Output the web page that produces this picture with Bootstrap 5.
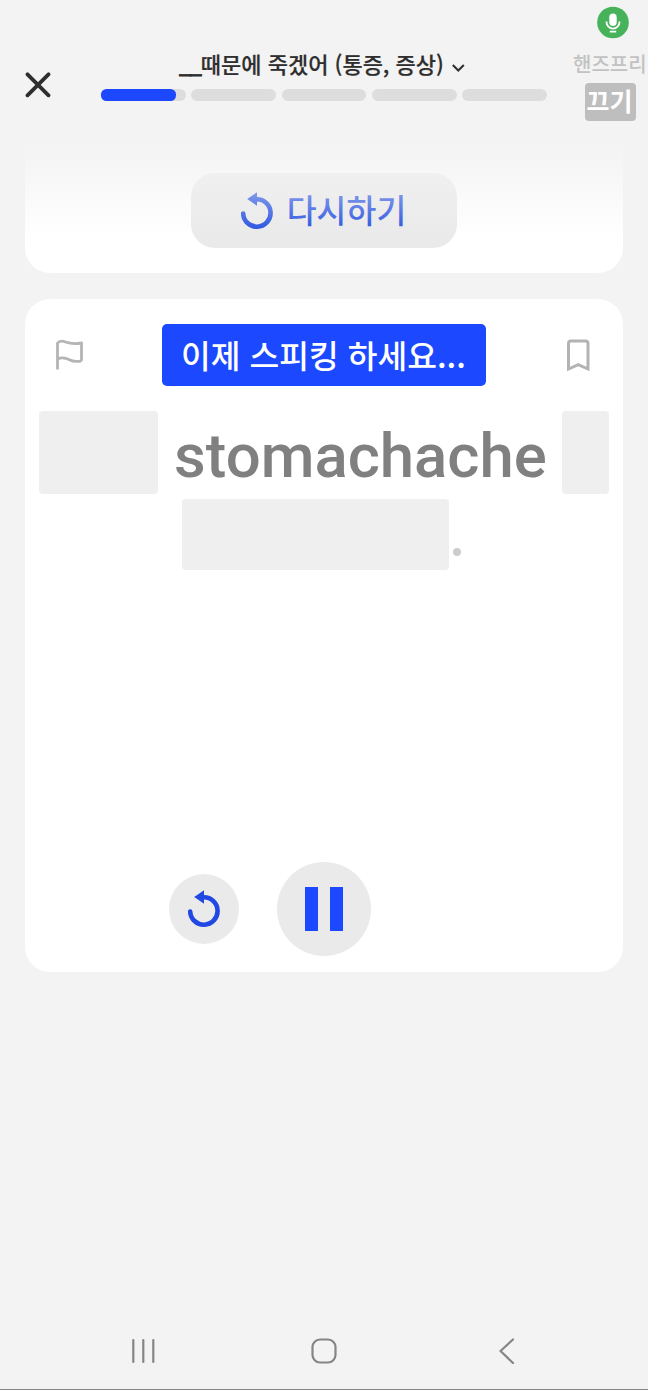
<!DOCTYPE html>
<html lang="ko">
<head>
<meta charset="utf-8">
<meta name="viewport" content="width=device-width, initial-scale=1">
<title>Speaking lesson</title>
<link href="https://cdn.jsdelivr.net/npm/bootstrap@5.3.0/dist/css/bootstrap.min.css" rel="stylesheet">
<script src="https://cdn.jsdelivr.net/npm/bootstrap@5.3.0/dist/js/bootstrap.bundle.min.js"></script>
<style>
  body { background: #f3f3f3; font-family: "Noto Sans CJK KR", sans-serif; color: #2e2e2e; height: 1390px; overflow: hidden; }
  svg { display: block; flex: none; }
  button { background: none; border: 0; padding: 0; }
  .app-screen { height: 1390px; border-bottom: 1px solid #858585; }
  .lesson-head { height: 143px; }
  .head-close { width: 101px; padding: 72px 0 0 25px; }
  .head-main { width: 446px; padding-top: 48px; }
  .head-side { width: 101px; padding-top: 6px; padding-left: 26px; }
  .lesson-title { font-size: 22px; font-weight: 500; line-height: 30px; height: 41px; white-space: nowrap; padding-right: 4px; -webkit-text-stroke: .2px currentColor; }
  .title-blank { letter-spacing: -2px; margin-right: 1px; -webkit-text-stroke: .8px currentColor; }
  .steps { gap: 5.5px; }
  .step { height: 12px; border-radius: 6px; background: #ddd; flex: 1; }
  .step-done { height: 12px; border-radius: 5.5px; background: #1c49ff; }
  .free-label { color: #c2c2c2; font-size: 20px; font-weight: 500; line-height: 26px; white-space: nowrap; margin-top: 12px; width: 75px; }
  .free-toggle { width: 51px; height: 38px; margin: 6px 0 0 12px; border-radius: 4px; background: #bebebe; color: #fff; font-size: 25px; font-weight: 700; line-height: 35px; padding-right: 2px; }
  .panel { width: 598px; margin: 0 25px; background: #fff; }
  .panel-prev { height: 130px; border-radius: 0 0 25px 25px; padding-top: 30px; position: relative; overflow: hidden; }
  .panel-prev::after { content: ""; position: absolute; inset: 0; pointer-events: none; background: linear-gradient(#f3f3f3 0, rgba(243,243,243,.78) 20px, rgba(243,243,243,.4) 55px, rgba(243,243,243,0) 94px); }
  .retry { width: 266px; height: 75px; border-radius: 24px; background: #eaeaea; color: #1f4be0; font-size: 32.5px; font-weight: 500; line-height: 1; gap: 14px; padding-right: 1px; }
  .retry span { margin-top: -2px; }
  .panel-now { height: 673px; margin-top: 26px; border-radius: 25px; padding-top: 25px; }
  .now-head { height: 62px; padding: 0 31px 0 30px; }
  .speak { width: 324px; height: 62px; margin-left: -4px; border-radius: 5px; background: #1c49ff; color: #fff; font-size: 32.3px; font-weight: 500; line-height: 60px; white-space: nowrap; }
  .sentence { margin: 25px 13.5px 0; height: 83px; }
  .blank { background: #efefef; border-radius: 4px; }
  .word { font: 500 61.7px/90px Roboto, sans-serif; color: #808080; padding-left: 1px; }
  .sentence-end { margin: 5px 0 0 157px; height: 71px; }
  .stop { width: 8px; height: 8px; border-radius: 50%; background: #ccc; margin: 0 0 14px 4px; }
  .controls { margin: 292px 0 0 144px; gap: 38px; }
  .ctl { background: #eaeaea; border-radius: 50%; }
  .sys-nav { margin-top: 366px; height: 26px; padding: 0 132px 0 131px; }
  .nav-home { margin-left: -8px; }
</style>
</head>
<body>
<svg width="0" height="0" class="position-absolute">
  <symbol id="replay" viewBox="0 0 32 38">
    <path d="M2.200 21.500A13.700 13.700 0 1 0 15.700 7.300" fill="none" stroke="currentColor" stroke-width="4.600" stroke-linecap="round"/>
    <path d="M6.200 7 16 .3v13.400z" fill="currentColor"/>
  </symbol>
</svg>
<main class="app-screen">
  <header class="lesson-head d-flex">
    <div class="head-close">
      <button aria-label="닫기"><svg width="26" height="26" viewBox="0 0 26 26"><path d="M2.500 2.300 23.500 23.300M23.500 2.300 2.500 23.300" stroke="#2e2e2e" stroke-width="3.800" stroke-linecap="round"/></svg></button>
    </div>
    <div class="head-main">
      <div class="lesson-title d-flex justify-content-center"><span><span class="title-blank">__</span>때문에 죽겠어 (통증, 증상)</span>
        <svg class="ms-2" width="13" height="30" viewBox="0 0 13 30"><path d="M.8 17 6.300 22.500 11.800 17" fill="none" stroke="#2e2e2e" stroke-width="2"/></svg>
      </div>
      <div class="steps d-flex">
        <div class="step"><div class="step-done" style="width:88%"></div></div>
        <div class="step"></div><div class="step"></div><div class="step"></div><div class="step"></div>
      </div>
    </div>
    <div class="head-side">
      <svg width="32" height="33" viewBox="0 0 32 33" style="margin-left:24px">
        <circle cx="16" cy="16.500" r="15.800" fill="#46b35a"/>
        <rect x="12.300" y="7.500" width="7.400" height="12.500" rx="3.700" fill="#fff"/>
        <path d="M9.500 15.500v.6a6.500 6.500 0 0 0 13 0v-.6M12.800 25.600h6.400" fill="none" stroke="#fff" stroke-width="1.800"/>
      </svg>
      <div class="free-label">핸즈프리</div>
      <div class="free-toggle text-center">끄기</div>
    </div>
  </header>

  <section class="panel panel-prev">
    <button class="retry d-flex align-items-center justify-content-center mx-auto">
      <svg width="32" height="38"><use href="#replay"/></svg><span>다시하기</span>
    </button>
  </section>

  <section class="panel panel-now">
    <div class="now-head d-flex justify-content-between align-items-center">
      <svg width="30" height="34" viewBox="0 0 30 34"><path d="M2.500 31.500V5Q6 2 10.500 4Q17.500 6.500 26.500 5V21Q26.500 23 24.500 23.300Q18 24 14.500 21.800Q8 18.500 2.500 21" fill="none" stroke="#b5b5b5" stroke-width="2.800" stroke-linejoin="round"/></svg>
      <div class="speak text-center">이제 스피킹 하세요...</div>
      <svg width="26" height="34" viewBox="0 0 26 34"><path d="M2.500 31V5.500Q2.500 3 5 3H19.500Q22 3 22 5.500V31L12.250 26.700Z" fill="none" stroke="#b3b3b3" stroke-width="3"/></svg>
    </div>
    <div class="sentence d-flex justify-content-between">
      <div class="blank" style="width:119px"></div>
      <div class="word">stomachache</div>
      <div class="blank" style="width:47px"></div>
    </div>
    <div class="sentence-end d-flex align-items-end">
      <div class="blank h-100" style="width:267px"></div><div class="stop"></div>
    </div>
    <div class="controls d-flex align-items-center">
      <button class="ctl d-flex align-items-center justify-content-center" style="width:70px;height:70px;color:#2148e2" aria-label="다시 듣기"><svg width="32" height="38"><use href="#replay"/></svg></button>
      <button class="ctl d-flex align-items-center justify-content-center" style="width:94px;height:94px" aria-label="일시정지"><svg width="38" height="44" viewBox="0 0 38 44"><path d="M0 0h13v44H0zM25 0h13v44H25z" fill="#1c49ff"/></svg></button>
    </div>
  </section>

  <nav class="sys-nav d-flex justify-content-between align-items-center">
    <svg width="26" height="26" viewBox="0 0 26 26"><path d="M2.300 2v22M12.300 2v22M22.300 2v22" stroke="#858585" stroke-width="2.200" stroke-linecap="round"/></svg>
    <svg class="nav-home" width="26" height="26" viewBox="0 0 26 26"><rect x="1.500" y="1.500" width="23" height="23" rx="7.500" fill="none" stroke="#858585" stroke-width="2.200"/></svg>
    <svg width="17" height="26" viewBox="0 0 17 26"><path d="M14 1.500 1.500 13 14 25" fill="none" stroke="#858585" stroke-width="2.200" stroke-linecap="round"/></svg>
  </nav>
</main>
</body>
</html>
